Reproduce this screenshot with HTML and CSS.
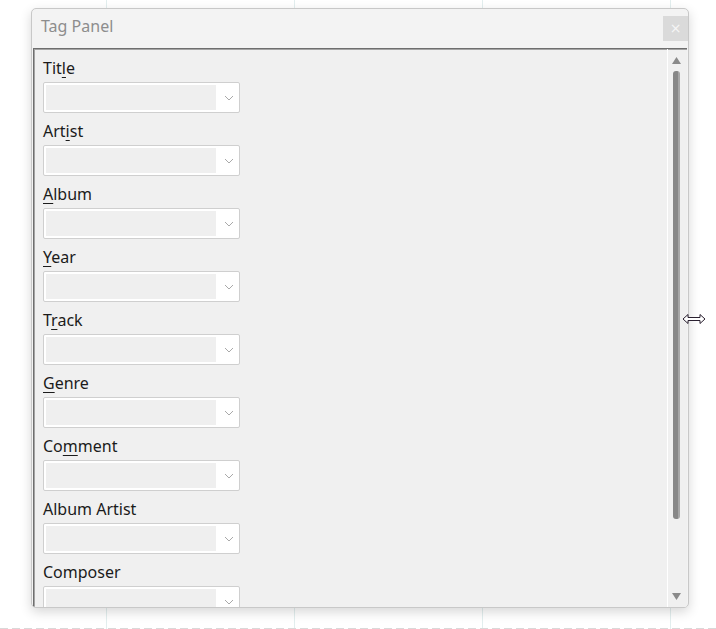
FILE: index.html
```html
<!DOCTYPE html>
<html>
<head>
<meta charset="utf-8">
<title>Tag Panel</title>
<link rel="stylesheet" href="styles.css">
</head>
<body>
<div class="panel">
  <div class="titlebar">
    <span class="title">Tag Panel</span>
    <span class="close">×</span>
  </div>
  <div class="body">
    <div class="fields">
      <div class="field"><div class="label">Tit<u>l</u>e</div><div class="combo"><div class="combo-input"></div><svg class="chev" width="10" height="6" viewBox="0 0 10 6"><polyline points="1,1 5,5 9,1" fill="none" stroke="#a9a9a9" stroke-width="1"/></svg></div></div>
      <div class="field"><div class="label">Art<u>i</u>st</div><div class="combo"><div class="combo-input"></div><svg class="chev" width="10" height="6" viewBox="0 0 10 6"><polyline points="1,1 5,5 9,1" fill="none" stroke="#a9a9a9" stroke-width="1"/></svg></div></div>
      <div class="field"><div class="label"><u>A</u>lbum</div><div class="combo"><div class="combo-input"></div><svg class="chev" width="10" height="6" viewBox="0 0 10 6"><polyline points="1,1 5,5 9,1" fill="none" stroke="#a9a9a9" stroke-width="1"/></svg></div></div>
      <div class="field"><div class="label"><u>Y</u>ear</div><div class="combo"><div class="combo-input"></div><svg class="chev" width="10" height="6" viewBox="0 0 10 6"><polyline points="1,1 5,5 9,1" fill="none" stroke="#a9a9a9" stroke-width="1"/></svg></div></div>
      <div class="field"><div class="label">T<u>r</u>ack</div><div class="combo"><div class="combo-input"></div><svg class="chev" width="10" height="6" viewBox="0 0 10 6"><polyline points="1,1 5,5 9,1" fill="none" stroke="#a9a9a9" stroke-width="1"/></svg></div></div>
      <div class="field"><div class="label"><u>G</u>enre</div><div class="combo"><div class="combo-input"></div><svg class="chev" width="10" height="6" viewBox="0 0 10 6"><polyline points="1,1 5,5 9,1" fill="none" stroke="#a9a9a9" stroke-width="1"/></svg></div></div>
      <div class="field"><div class="label">Co<u>m</u>ment</div><div class="combo"><div class="combo-input"></div><svg class="chev" width="10" height="6" viewBox="0 0 10 6"><polyline points="1,1 5,5 9,1" fill="none" stroke="#a9a9a9" stroke-width="1"/></svg></div></div>
      <div class="field"><div class="label">Album Artist</div><div class="combo"><div class="combo-input"></div><svg class="chev" width="10" height="6" viewBox="0 0 10 6"><polyline points="1,1 5,5 9,1" fill="none" stroke="#a9a9a9" stroke-width="1"/></svg></div></div>
      <div class="field"><div class="label">Composer</div><div class="combo"><div class="combo-input"></div><svg class="chev" width="10" height="6" viewBox="0 0 10 6"><polyline points="1,1 5,5 9,1" fill="none" stroke="#a9a9a9" stroke-width="1"/></svg></div></div>
    </div>
    <div class="scrollbar">
      <svg class="arrow-up" width="9" height="7" viewBox="0 0 9 7"><polygon points="4.5,0 9,7 0,7" fill="#8a8a8a"/></svg>
      <div class="thumb"></div>
      <div class="spacer"></div>
      <svg class="arrow-down" width="9" height="7" viewBox="0 0 9 7"><polygon points="0,0 9,0 4.5,7" fill="#8a8a8a"/></svg>
    </div>
  </div>
</div>
<svg class="cursor" width="24" height="12" viewBox="0 0 24 12"><path d="M1 6 L6 1.5 L6 4.5 L18 4.5 L18 1.5 L23 6 L18 10.5 L18 7.5 L6 7.5 L6 10.5 Z" fill="#fff" stroke="#2a2030" stroke-width="1" stroke-linejoin="miter"/></svg>
</body>
</html>
```

FILE: styles.css
```css
html, body {
  margin: 0;
  padding: 0;
}

body {
  width: 716px;
  height: 629px;
  position: relative;
  overflow: hidden;
  font-family: "Noto Sans", "Open Sans", sans-serif;
  background-color: #ffffff;
  background-image:
    repeating-linear-gradient(to right, #d9d9d9 0 8px, transparent 8px 12px),
    linear-gradient(to right, #e2eeee 0 1px, transparent 1px);
  background-size: 100% 1px, 188px 100%;
  background-position: 0 628px, 106px 0;
  background-repeat: no-repeat, repeat-x;
  padding-top: 8px;
  box-sizing: border-box;
}

.panel {
  margin-left: 31px;
  width: 658px;
  height: 600px;
  box-sizing: border-box;
  border: 1px solid #c8c8c8;
  border-radius: 5px;
  background: #f3f3f3;
  box-shadow: 0 4px 12px rgba(0, 0, 0, 0.16);
  display: flex;
  flex-direction: column;
  overflow: hidden;
}

.titlebar {
  height: 39px;
  flex: none;
  display: flex;
  align-items: flex-start;
  justify-content: space-between;
}

.title {
  margin: 6px 0 0 9px;
  font-size: 16px;
  line-height: 22px;
  color: #8d8d8d;
}

.close {
  margin-top: 7px;
  width: 25px;
  height: 25px;
  background: #dadada;
  color: #f6f6f6;
  font-size: 14px;
  line-height: 25px;
  text-align: center;
  font-family: "DejaVu Sans", sans-serif;
}

.body {
  flex: 1;
  min-height: 0;
  margin: 0 1px;
  display: flex;
  background: #f0f0f0;
  border-top: 1px solid #6e6e6e;
  border-left: 1px solid #6e6e6e;
  box-shadow: inset 1px 1px 0 #a4a4a4;
}

.fields {
  flex: 1;
  min-width: 0;
  overflow: hidden;
  padding: 9px 0 0 9px;
}

.field {
  margin-bottom: 8px;
}

.label {
  font-size: 16px;
  line-height: 20px;
  color: #1b1b1b;
  margin-bottom: 4px;
}

.label u {
  text-underline-offset: 3px;
}

.combo {
  width: 197px;
  height: 31px;
  box-sizing: border-box;
  border: 1px solid #cfcfcf;
  border-radius: 2px;
  background: #ffffff;
  display: flex;
  align-items: center;
}

.combo-input {
  margin-left: 2px;
  width: 170px;
  height: 25px;
  background: #efefef;
}

.chev {
  margin-left: 8px;
  margin-top: 1px;
}

.scrollbar {
  width: 20px;
  box-sizing: border-box;
  padding-right: 2px;
  flex: none;
  border-left: 1px solid #ffffff;
  display: flex;
  flex-direction: column;
  align-items: center;
}

.arrow-up {
  margin-top: 8px;
  flex: none;
}

.thumb {
  margin-top: 7px;
  width: 7px;
  height: 448px;
  border-radius: 3px;
  background: linear-gradient(to right, #878787 0 70%, #a6a6a6 70%);
  flex: none;
}

.spacer {
  flex: 1;
}

.arrow-down {
  margin-bottom: 7px;
  flex: none;
}

.cursor {
  position: absolute;
  left: 682px;
  top: 313px;
}
```
